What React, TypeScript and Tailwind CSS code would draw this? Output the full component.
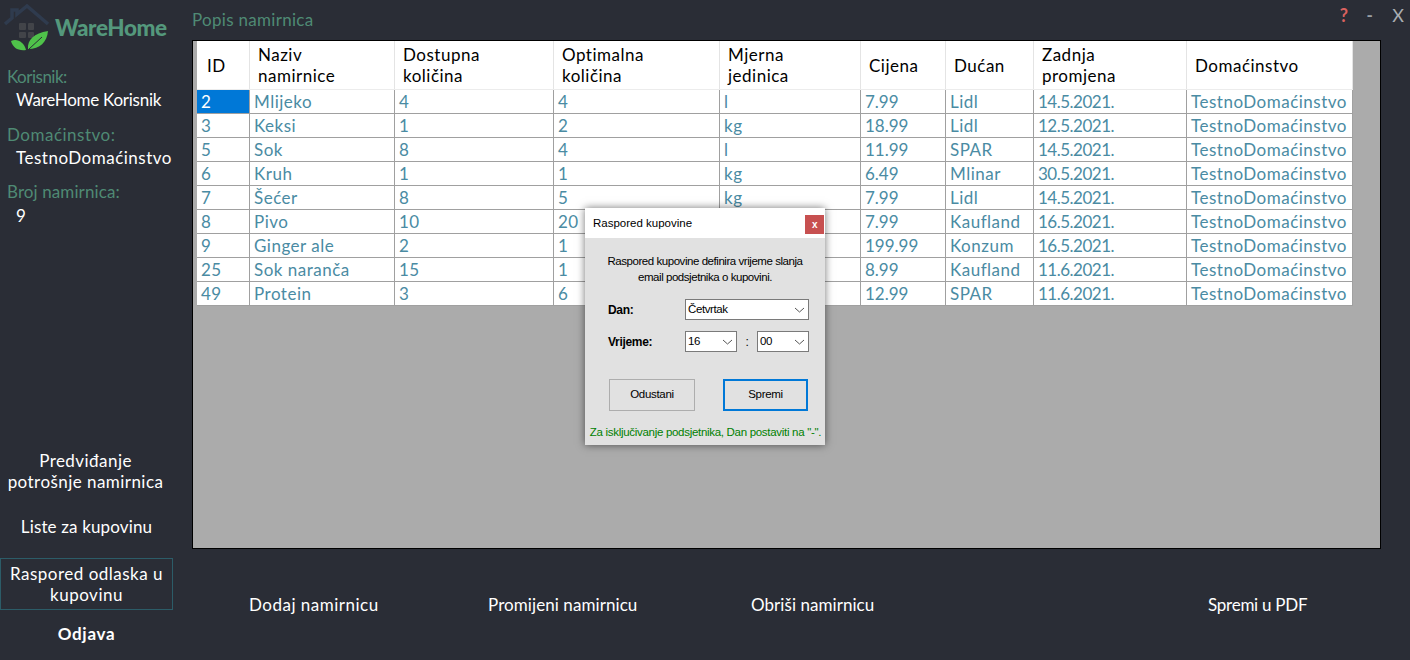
const headers = [
  { label: ["ID"], w: "w-[53px]" },
  { label: ["Naziv", "namirnice"], w: "w-[145px]" },
  { label: ["Dostupna", "količina"], w: "w-[159px]" },
  { label: ["Optimalna", "količina"], w: "w-[166px]" },
  { label: ["Mjerna", "jedinica"], w: "w-[141px]" },
  { label: ["Cijena"], w: "w-[85px]" },
  { label: ["Dućan"], w: "w-[88px]" },
  { label: ["Zadnja", "promjena"], w: "w-[153px]" },
  { label: ["Domaćinstvo"], w: "w-[166px]" },
];

const rows = [
  ["2", "Mlijeko", "4", "4", "l", "7.99", "Lidl", "14.5.2021.", "TestnoDomaćinstvo"],
  ["3", "Keksi", "1", "2", "kg", "18.99", "Lidl", "12.5.2021.", "TestnoDomaćinstvo"],
  ["5", "Sok", "8", "4", "l", "11.99", "SPAR", "14.5.2021.", "TestnoDomaćinstvo"],
  ["6", "Kruh", "1", "1", "kg", "6.49", "Mlinar", "30.5.2021.", "TestnoDomaćinstvo"],
  ["7", "Šećer", "8", "5", "kg", "7.99", "Lidl", "14.5.2021.", "TestnoDomaćinstvo"],
  ["8", "Pivo", "10", "20", "l", "7.99", "Kaufland", "16.5.2021.", "TestnoDomaćinstvo"],
  ["9", "Ginger ale", "2", "1", "l", "199.99", "Konzum", "16.5.2021.", "TestnoDomaćinstvo"],
  ["25", "Sok naranča", "15", "1", "l", "8.99", "Kaufland", "11.6.2021.", "TestnoDomaćinstvo"],
  ["49", "Protein", "3", "6", "kg", "12.99", "SPAR", "11.6.2021.", "TestnoDomaćinstvo"],
];

function Logo() {
  return (
    <svg width="52" height="52" viewBox="0 0 52 52" className="shrink-0">
      <path d="M5 24 L12 18 L12 10 L17 10 L17 14 L27 6 L48 24" fill="none" stroke="#2f3b4e" strokeWidth="3.5" />
      <rect x="19" y="23" width="7" height="7" rx="1" fill="#424449" />
      <rect x="28" y="23" width="6" height="7" rx="1" fill="#424449" />
      <rect x="19" y="32" width="7" height="6" rx="1" fill="#424449" />
      <rect x="28" y="32" width="6" height="6" rx="1" fill="#424449" />
      <path d="M11 41 C17 38 24 42 26 50 C18 51 13 48 11 41 Z" fill="#4fc24a" />
      <path d="M28 49 C27 40 34 33 48 31 C47 42 40 49 28 49 Z" fill="#4fc24a" />
      <path d="M29 49 L42 37" stroke="#2a2d36" strokeWidth="1" />
    </svg>
  );
}

function Select({ value, w }: { value: string; w: string }) {
  return (
    <div className={`${w} h-[21px] bg-white border border-[#7a7a7a] flex items-center justify-between pl-[2px] pr-[3px] text-[11.5px] tracking-[-0.4px] text-black`}>
      <span>{value}</span>
      <svg width="11" height="6" viewBox="0 0 11 6">
        <path d="M1 1 L5.5 5 L10 1" fill="none" stroke="#555" />
      </svg>
    </div>
  );
}

function ScheduleDialog() {
  return (
    <div className="absolute left-[585px] top-[208px] w-[240px] h-[237px] bg-[#e1e1e1] shadow-[0_0_8px_rgba(0,0,0,0.55)] font-['Liberation_Sans',sans-serif] tracking-[-0.45px]">
      <div className="h-[30px] bg-white flex items-center justify-between pl-[8px] pr-[1px]">
        <span className="mt-[1px] text-[11.5px] text-black tracking-normal">Raspored kupovine</span>
        <span className="w-[19px] h-[19px] mt-[3px] bg-[#c75050] text-white text-[10px] font-bold flex items-center justify-center">x</span>
      </div>
      <p className="mt-[15px] text-center text-[11.5px] leading-[16px] text-black">
        Raspored kupovine definira vrijeme slanja
        <br />
        email podsjetnika o kupovini.
      </p>
      <div className="mt-[14px] flex items-center pl-[23px]">
        <span className="w-[77px] text-[12px] font-bold text-black tracking-[-0.3px]">Dan:</span>
        <Select value="Četvrtak" w="w-[124px]" />
      </div>
      <div className="mt-[11px] flex items-center pl-[23px]">
        <span className="w-[77px] text-[12px] font-bold text-black tracking-[-0.3px]">Vrijeme:</span>
        <Select value="16" w="w-[52px]" />
        <span className="w-[20px] text-center text-[12px] text-black">:</span>
        <Select value="00" w="w-[52px]" />
      </div>
      <div className="mt-[27px] flex justify-between pl-[24px] pr-[17px]">
        <button className="w-[86px] h-[32px] bg-[#e1e1e1] border border-[#adadad] text-[11.5px] tracking-[-0.3px] text-black">Odustani</button>
        <button className="w-[85px] h-[32px] bg-[#e1e1e1] border-2 border-[#0078d7] text-[11.5px] tracking-[-0.3px] text-black">Spremi</button>
      </div>
      <p className="mt-[13px] pl-[1px] text-center text-[11.5px] tracking-[-0.3px] text-[#008000] whitespace-nowrap">
        Za isključivanje podsjetnika, Dan postaviti na "-".
      </p>
    </div>
  );
}

export default function App() {
  return (
    <div className="relative w-[1410px] h-[660px] overflow-hidden bg-[#2a2d36] flex font-['Lato','Open_Sans',sans-serif] text-[17px] tracking-[0.5px] text-white">
      <aside className="w-[192px] shrink-0 h-full flex flex-col">
        <div className="h-[52px] flex items-center">
          <Logo />
          <span className="text-[22.5px] tracking-[-0.4px] leading-none font-black text-[#54987c] ml-[3px] mt-[4px]">WareHome</span>
        </div>
        <div className="pl-[7px] pt-[14px] leading-[22px]">
          <div className="text-[#4f8a74] tracking-[-0.5px]">Korisnik:</div>
          <div className="pl-[9px] mt-[1px] tracking-[-0.25px]">WareHome Korisnik</div>
          <div className="text-[#4f8a74] mt-[13px]">Domaćinstvo:</div>
          <div className="pl-[9px] mt-[1px]">TestnoDomaćinstvo</div>
          <div className="text-[#4f8a74] mt-[12px] tracking-[0.1px]">Broj namirnica:</div>
          <div className="pl-[9px] mt-[2px]">9</div>
        </div>
        <div className="mt-auto w-[173px] text-center leading-[21px]">
          <div className="whitespace-nowrap pr-[2px] tracking-[0.45px]">
            Predviđanje
            <br />
            potrošnje namirnica
          </div>
          <div className="mt-[24px] tracking-[0.15px]">Liste za kupovinu</div>
          <div className="mt-[21px] h-[52px] border border-[#2c5c68] flex items-center justify-center whitespace-nowrap">
            <span>
              Raspored odlaska u
              <br />
              kupovinu
            </span>
          </div>
          <div className="mt-[13px] mb-[16px] font-bold tracking-[0.7px]">Odjava</div>
        </div>
      </aside>

      <main className="flex-1 h-full flex flex-col">
        <div className="h-[40px] flex items-start justify-between">
          <span className="mt-[9px] leading-[22px] tracking-[0.3px] text-[#4f8a74]">Popis namirnica</span>
          <div className="flex items-center mt-[4px] leading-[22px] font-bold">
            <span className="text-[18px] text-[#d9615f]">?</span>
            <span className="ml-[18px] text-[#9aa0a6]">-</span>
            <span className="ml-[19px] mr-[6px] text-[#a9adb2] font-normal text-[18px] tracking-normal">X</span>
          </div>
        </div>
        <div className="w-[1189px] h-[509px] bg-[#ababab] border border-black pl-[4px] overflow-hidden">
          <div className="w-[1156px] bg-white">
            <div className="flex h-[49px] border-b border-[#ececec]">
              {headers.map((h, i) => (
                <div
                  key={i}
                  className={`${h.w} shrink-0 h-full border-r border-[#e4e4e4] ${i === 0 ? "pl-[10px]" : "pl-[8px]"} flex flex-col justify-center text-black leading-[21px]`}
                >
                  {h.label.map((l) => (
                    <span key={l}>{l}</span>
                  ))}
                </div>
              ))}
            </div>
            {rows.map((row, r) => (
              <div key={r} className="flex h-[24px] border-b border-[#a0a0a0]">
                {row.map((cell, c) => (
                  <div
                    key={c}
                    className={`${headers[c].w} shrink-0 h-full border-r border-[#a0a0a0] pl-[4px] leading-[24px] whitespace-nowrap overflow-hidden ${
                      c === 7 ? "tracking-[-0.5px]" : c === 5 ? "tracking-normal" : ""
                    } ${r === 0 && c === 0 ? "bg-[#0078d7] text-white" : "text-[#4a8ba3]"}`}
                  >
                    {cell}
                  </div>
                ))}
              </div>
            ))}
          </div>
        </div>
        <div className="flex-1 relative">
          <div className="flex pt-[45px] leading-[22px]">
            <span className="ml-[57px] w-[239px]">Dodaj namirnicu</span>
            <span className="w-[263px] tracking-[0.08px]">Promijeni namirnicu</span>
            <span className="w-[457px] tracking-[0.06px]">Obriši namirnicu</span>
            <span className="tracking-[-0.25px]">Spremi u PDF</span>
          </div>
        </div>
      </main>

      <ScheduleDialog />
    </div>
  );
}
